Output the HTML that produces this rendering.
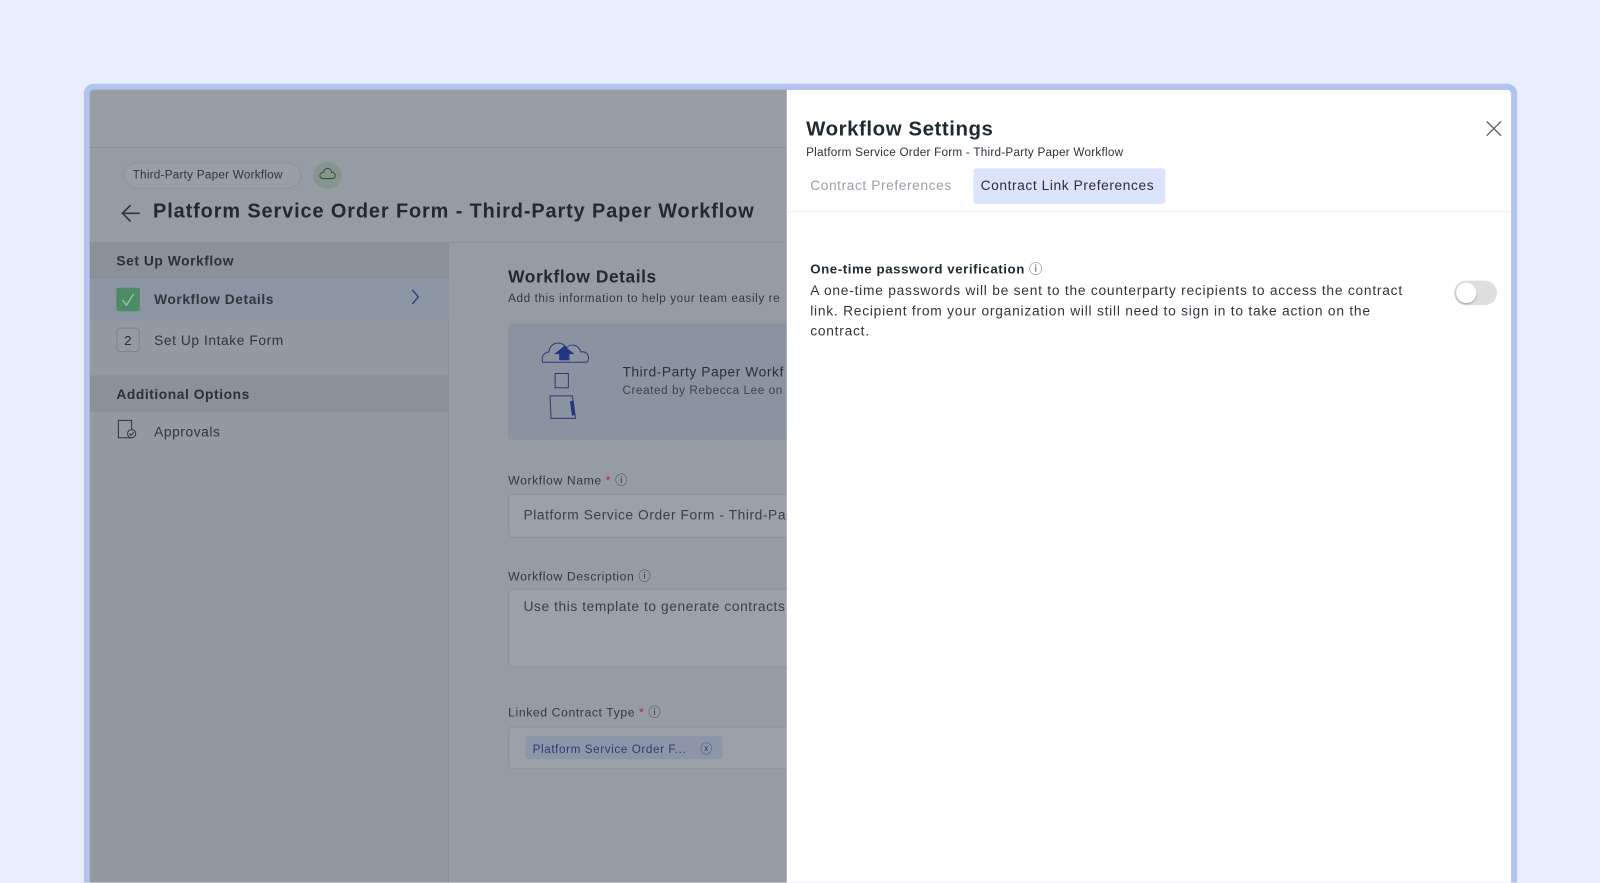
<!DOCTYPE html>
<html><head><meta charset="utf-8"><style>
*{box-sizing:border-box;margin:0;padding:0}
html,body{overflow:hidden}
body{width:1600px;height:883px;background:#e8eefc;font-family:"Liberation Sans",sans-serif;position:relative;color:#2a3138;letter-spacing:0.035em}
.wrap{position:absolute;left:0;top:0;width:1568px;height:865px;transform:scale(1.0204);transform-origin:0 0;overflow:hidden}
.frame{position:absolute;left:82px;top:82px;width:1405px;height:783px;border:6px solid #b3c3f0;border-bottom:none;border-radius:10px 10px 0 0;background:#959ca2;overflow:hidden}
.abs{position:absolute}
.topbar{left:0;top:0;width:690px;height:57px;background:#979ea4;border-bottom:1px solid #8b9298}
.side{left:0;top:150px;width:352px;height:640px;background:#939aa0;border-right:1px solid #8a9197}
.sh{left:0;width:352px;height:35px;background:#8a9198;font-weight:bold;font-size:13.5px;padding:10px 0 0 26px;color:#2a3138}
.txt{font-size:13.5px;color:#2f363c}
.label{font-size:12px;color:#333a40}
.input{background:#9aa1a7;border:1px solid #8a9197;border-radius:4px}
.panel{left:683px;top:0;width:711px;height:790px;background:#fff}
</style></head><body>
<div class="wrap">
<div class="frame">
  <div class="abs topbar"></div>
  <div class="abs" style="left:33px;top:71px;width:174px;height:26px;border:1px solid #8c9399;border-radius:13px;font-size:11.5px;letter-spacing:0.02em;padding:6px 0 0 8px;color:#2f363c;background:#989fa5;white-space:nowrap">Third-Party Paper Workflow</div>
  <div class="abs" style="left:219px;top:71px;width:28px;height:26px;border-radius:13px;background:#87958f"><svg width="28" height="26" viewBox="0 0 28 26"><path d="M9 16a3 3 0 0 1 1-6a4 4 0 0 1 8 0a3 3 0 0 1 1 6z" fill="none" stroke="#3b4a44" stroke-width="1"/></svg></div>
  <svg class="abs" style="left:30px;top:109px" width="22" height="24" viewBox="0 0 22 24"><path d="M19 12H3M10 4L2 12l8 8" fill="none" stroke="#2f363c" stroke-width="1.6"/></svg>
  <div class="abs" style="left:62px;top:108px;font-size:19.5px;font-weight:bold;color:#222a30;white-space:nowrap;letter-spacing:0.045em">Platform Service Order Form - Third-Party Paper Workflow</div>
  <div class="abs" style="left:0;top:149px;width:1400px;height:1px;background:#8b9298"></div>
  <div class="abs side"></div>
  <div class="abs sh" style="top:150px">Set Up Workflow</div>
  <div class="abs" style="left:0;top:186px;width:352px;height:40px;background:#8b95a4"></div>
  <div class="abs" style="left:26px;top:194px;width:23px;height:23px;background:#4d8a68;border-radius:2px"><svg width="23" height="23"><path d="M6 12l4 5 7-11" fill="none" stroke="#a3c9b3" stroke-width="1.2"/></svg></div>
  <div class="abs txt" style="left:63px;top:198px;font-weight:bold">Workflow Details</div>
  <svg class="abs" style="left:313px;top:194px" width="12" height="18"><path d="M3 2l6 7-6 7" fill="none" stroke="#2e3b77" stroke-width="1.3"/></svg>
  <div class="abs" style="left:26px;top:233px;width:23px;height:24px;border:1px solid #7e858b;border-radius:3px;font-size:13px;text-align:center;padding-top:4px">2</div>
  <div class="abs txt" style="left:63px;top:238px">Set Up Intake Form</div>
  <div class="abs sh" style="top:280px;height:36px;padding-top:11px">Additional Options</div>
  <svg class="abs" style="left:26px;top:322px" width="22" height="22"><rect x="2" y="2" width="13" height="17" fill="none" stroke="#2f363c"/><circle cx="15" cy="15" r="4" fill="#939aa0" stroke="#2f363c"/><path d="M13 15l1.5 1.5 2.5-3" fill="none" stroke="#2f363c"/></svg>
  <div class="abs txt" style="left:63px;top:328px">Approvals</div>

  <div class="abs" style="left:410px;top:174px;font-size:17px;font-weight:bold;color:#222a30">Workflow Details</div>
  <div class="abs" style="left:410px;top:199px;font-size:11.5px;color:#333a40;white-space:nowrap">Add this information to help your team easily re</div>
  <div class="abs" style="left:410px;top:229px;width:300px;height:114px;background:#8b92a0;border-radius:4px"></div>
  <svg class="abs" style="left:436px;top:245px" width="60" height="80" viewBox="0 0 60 80"><path d="M8 22a7 7 0 0 1 6-10a9 9 0 0 1 17-4a8 8 0 0 1 14 4a6 6 0 0 1 6 10z" fill="none" stroke="#2e3b77"/><path d="M24 20v-6h-5l10-8 10 8h-5v6z" fill="#233583"/><rect x="20" y="33" width="13" height="14" fill="none" stroke="#2e3b77"/><path d="M15 55h22l3 22H16z" fill="none" stroke="#2e3b77"/><path d="M36 60l2 14" stroke="#233583" stroke-width="3"/></svg>
  <div class="abs" style="left:522px;top:269px;font-size:13.5px;color:#2a3138;white-space:nowrap">Third-Party Paper Workf</div>
  <div class="abs" style="left:522px;top:289px;font-size:11.5px;color:#3d444b;white-space:nowrap">Created by Rebecca Lee on</div>

  <div class="abs label" style="left:410px;top:374px">Workflow Name <span style="color:#a33">*</span> ⓘ</div>
  <div class="abs input" style="left:410px;top:396px;width:290px;height:43px"></div>
  <div class="abs txt" style="left:425px;top:409px;color:#3a4147;white-space:nowrap">Platform Service Order Form - Third-Part</div>
  <div class="abs label" style="left:410px;top:468px">Workflow Description ⓘ</div>
  <div class="abs input" style="left:410px;top:489px;width:290px;height:77px"></div>
  <div class="abs txt" style="left:425px;top:499px;color:#3a4147;white-space:nowrap">Use this template to generate contracts</div>
  <div class="abs label" style="left:410px;top:601px">Linked Contract Type <span style="color:#a33">*</span> ⓘ</div>
  <div class="abs input" style="left:410px;top:624px;width:290px;height:42px"></div>
  <div class="abs" style="left:427px;top:633px;width:193px;height:23px;background:#8d96a8;border-radius:3px;font-size:11.5px;color:#2e3b77;padding:5px 0 0 7px;white-space:nowrap">Platform Service Order F... <span style="margin-left:10px">ⓧ</span></div>

  <div class="abs panel">
    <div class="abs" style="left:19px;top:28px;font-size:20px;font-weight:bold;color:#1f2a30">Workflow Settings</div>
    <div class="abs" style="left:19px;top:56px;font-size:11.5px;color:#2a3138;letter-spacing:0.02em;white-space:nowrap">Platform Service Order Form - Third-Party Paper Workflow</div>
    <div class="abs" style="left:23px;top:86px;font-size:13.5px;color:#9aa1a8">Contract Preferences</div>
    <div class="abs" style="left:183px;top:77px;width:188px;height:35px;background:#dbe3fd;border-radius:3px;font-size:13.5px;color:#2a3138;padding:9px 0 0 7px;white-space:nowrap">Contract Link Preferences</div>
    <svg class="abs" style="left:684px;top:29px" width="18" height="18"><path d="M2 2l14 14M16 2L2 16" stroke="#555" stroke-width="1.2"/></svg>
    <div class="abs" style="left:0;top:119px;width:711px;height:1px;background:#eceef0"></div>
    <div class="abs" style="left:23px;top:165px;font-size:13px;font-weight:bold;color:#1f2a30;white-space:nowrap">One-time password verification <span style="font-weight:normal;color:#555">ⓘ</span></div>
    <div class="abs" style="left:23px;top:187px;width:596px;font-size:13.5px;line-height:20px;color:#2f363c;letter-spacing:0.055em">A one-time passwords will be sent to the counterparty recipients to access the contract link. Recipient from your organization will still need to sign in to take action on the contract.</div>
    <div class="abs" style="left:654px;top:187px;width:42px;height:24px;border-radius:12px;background:#dcdee0"><div style="position:absolute;left:2px;top:2px;width:20px;height:20px;border-radius:50%;background:#fff;box-shadow:0 1px 2px rgba(0,0,0,.3)"></div></div>
  </div>
</div>
</div>
</body></html>
